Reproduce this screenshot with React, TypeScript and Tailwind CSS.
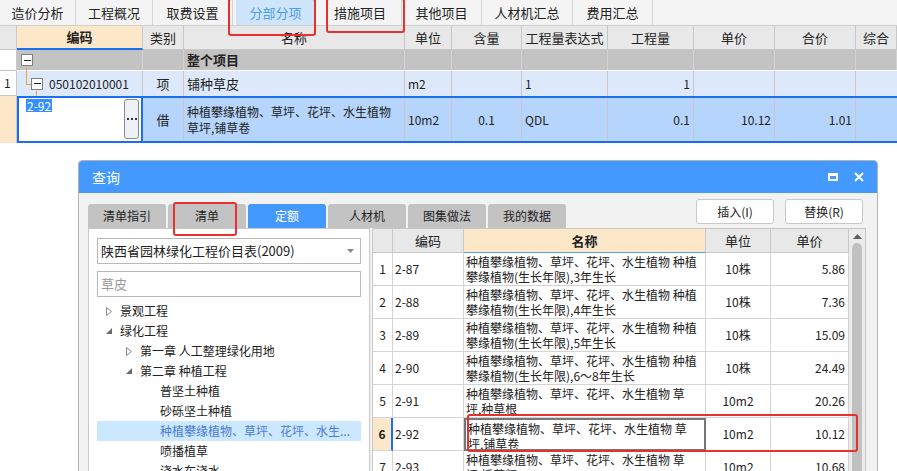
import React from 'react'

const topTabs = [
  { label: '造价分析', w: 'w-[76px]' },
  { label: '工程概况', w: 'w-[77px]' },
  { label: '取费设置', w: 'w-[80px]' },
  { label: '分部分项', w: 'w-[80px]', active: true },
  { label: '措施项目', w: 'w-[83px]' },
  { label: '其他项目', w: 'w-[80px]' },
  { label: '人材机汇总', w: 'w-[91px]' },
  { label: '费用汇总', w: 'w-[80px]' },
]

const headCols = ['编码', '类别', '名称', '单位', '含量', '工程量表达式', '工程量', '单价', '合价', '综合']

const quotaRows = [
  { no: '1', code: '2-87', name: ['种植攀缘植物、草坪、花坪、水生植物 种植', '攀缘植物(生长年限),3年生长'], unit: '10株', price: '5.86' },
  { no: '2', code: '2-88', name: ['种植攀缘植物、草坪、花坪、水生植物 种植', '攀缘植物(生长年限),4年生长'], unit: '10株', price: '7.36' },
  { no: '3', code: '2-89', name: ['种植攀缘植物、草坪、花坪、水生植物 种植', '攀缘植物(生长年限),5年生长'], unit: '10株', price: '15.09' },
  { no: '4', code: '2-90', name: ['种植攀缘植物、草坪、花坪、水生植物 种植', '攀缘植物(生长年限),6～8年生长'], unit: '10株', price: '24.49' },
  { no: '5', code: '2-91', name: ['种植攀缘植物、草坪、花坪、水生植物 草', '坪,种草根'], unit: '10m2', price: '20.26' },
  { no: '6', code: '2-92', name: ['种植攀缘植物、草坪、花坪、水生植物 草', '坪,铺草卷'], unit: '10m2', price: '10.12', selected: true },
  { no: '7', code: '2-93', name: ['种植攀缘植物、草坪、花坪、水生植物 草', '坪,播草籽'], unit: '10m2', price: '10.68' },
]

function Collapsed() {
  return (
    <svg width="6" height="9" viewBox="0 0 6 9" className="shrink-0">
      <path d="M0.5 0.5 L5.5 4.5 L0.5 8.5 Z" fill="#fff" stroke="#8a8a8a" />
    </svg>
  )
}

function Expanded() {
  return (
    <svg width="6" height="6" viewBox="0 0 6 6" className="shrink-0">
      <path d="M6 0 L6 6 L0 6 Z" fill="#6b6b6b" />
    </svg>
  )
}

function MinusBox() {
  return (
    <div className="w-[12px] h-[12px] border border-[#808080] bg-white flex items-center justify-center">
      <div className="w-[7px] h-[1px] bg-[#222]" />
    </div>
  )
}

function TreeItem({ level, icon, label, selected }: { level: number; icon?: 'c' | 'e'; label: string; selected?: boolean }) {
  const pad = level === 0 ? 'pl-[9px]' : level === 1 ? 'pl-[29px]' : 'pl-[63px]'
  return (
    <div className={`h-[20px] flex items-center gap-[8px] ${pad} ${selected ? 'bg-[#cce8ff] text-[#4a7bd6]' : 'text-[#222]'}`}>
      {icon === 'c' && <Collapsed />}
      {icon === 'e' && <Expanded />}
      <span className="whitespace-nowrap">{label}</span>
    </div>
  )
}

export default function App() {
  return (
    <div className="relative w-[897px] h-[471px] overflow-hidden bg-white font-['Noto_Sans_CJK_SC','Noto_Sans',sans-serif] text-[12px] text-[#222]">
      {/* top tab bar */}
      <div className="h-[26px] flex bg-[#f4f4f4] border-b border-[#cfcfcf]">
        {topTabs.map((t) => (
          <div
            key={t.label}
            className={`${t.w} flex items-center justify-center text-[13px] border-r border-[#d6d6d6] ${t.active ? 'bg-[#cfe5fb] text-[#4b9bf3] mx-[3px] w-[77px]' : 'text-[#222]'}`}
          >
            {t.label}
          </div>
        ))}
      </div>

      {/* header */}
      <div className="grid grid-cols-[17px_126px_41px_221px_47px_70px_86px_86px_81px_81px_41px] h-[24px] bg-[#e8e8e8] text-[13px]">
        <div className="border-r border-b border-[#c8c8c8]" />
        {headCols.map((h, i) => (
          <div
            key={h}
            className={`flex items-center justify-center border-r border-[#c8c8c8] whitespace-nowrap overflow-hidden ${i === 0 ? 'bg-[#fde7c9] font-bold border-b-2 border-b-[#1a6ff0]' : 'border-b'}`}
          >
            {h}
          </div>
        ))}
      </div>

      {/* 整个项目 */}
      <div className="grid grid-cols-[17px_126px_41px_221px_47px_70px_86px_86px_81px_81px_41px] h-[21px]">
        <div className="bg-white border-r border-[#c8c8c8]" />
        <div className="bg-[#c3c3c3] border-r border-[#d2d2d2] flex items-center pl-[4px] relative">
          <MinusBox />
          <div className="absolute left-[9px] top-[17px] w-[1px] h-[8px] bg-[#f0a040]" />
        </div>
        <div className="bg-[#c3c3c3] border-r border-[#d2d2d2]" />
        <div className="bg-[#c3c3c3] border-r border-[#d2d2d2] flex items-center pl-[3px] font-bold text-[13px]">整个项目</div>
        {[0, 1, 2, 3, 4, 5, 6, 7].map((i) => (
          <div key={i} className="bg-[#c3c3c3] border-r border-[#d2d2d2]" />
        ))}
      </div>

      {/* row 1 */}
      <div className="grid grid-cols-[17px_126px_41px_221px_47px_70px_86px_86px_81px_81px_41px] h-[25px] bg-[#dde9fb]">
        <div className="bg-white border-r border-b border-[#c8c8c8] flex items-center pl-[4px]">1</div>
        <div className="relative border-r border-[#c8c8c8] flex items-center pl-[14px] gap-[6px]">
          <div className="absolute left-[9px] top-0 w-[1px] h-[13px] bg-[#f0a040]" />
          <div className="absolute left-[9px] top-[13px] w-[5px] h-[1px] bg-[#f0a040]" />
          <div className="absolute left-[19px] top-[20px] w-[1px] h-[5px] bg-[#f0a040]" />
          <MinusBox />
          <span>050102010001</span>
        </div>
        <div className="border-r border-[#c8c8c8] flex items-center justify-center text-[13px]">项</div>
        <div className="border-r border-[#c8c8c8] flex items-center pl-[3px] text-[13px]">铺种草皮</div>
        <div className="border-r border-[#c8c8c8] flex items-center pl-[3px]">m2</div>
        <div className="border-r border-[#c8c8c8]" />
        <div className="border-r border-[#c8c8c8] flex items-center pl-[3px]">1</div>
        <div className="border-r border-[#c8c8c8] flex items-center justify-end pr-[3px]">1</div>
        <div className="border-r border-[#c8c8c8]" />
        <div className="border-r border-[#c8c8c8]" />
        <div />
      </div>

      {/* row 2 */}
      <div className="flex h-[47px]">
        <div className="w-[17px] bg-[#fde7c9] border-r border-[#c8c8c8]" />
        <div className="flex-1 grid grid-cols-[124px_41px_221px_47px_70px_86px_86px_81px_81px_41px] border-y-2 border-l-2 border-[#1a6ff0] bg-[#b5d5fd]">
          <div className="bg-white border-r-2 border-[#1a6ff0] relative">
            <span className="absolute left-[7px] top-[1px] bg-[#3390ff] text-white leading-[13px] px-[1px]">2-92</span>
            <div className="absolute right-[2px] top-[1px] w-[15px] h-[40px] rounded-[3px] border border-[#8a8a8a] bg-[#eef2f8] flex items-center justify-center gap-[2px]">
              <div className="w-[2px] h-[2px] bg-[#333]" />
              <div className="w-[2px] h-[2px] bg-[#333]" />
              <div className="w-[2px] h-[2px] bg-[#333]" />
            </div>
          </div>
          <div className="border-r border-[#c8c8c8] flex items-center justify-center text-[13px]">借</div>
          <div className="border-r border-[#c8c8c8] flex flex-col justify-center pl-[3px] text-[12px] leading-[16px] whitespace-nowrap overflow-hidden">
            <span>种植攀缘植物、草坪、花坪、水生植物</span>
            <span>草坪,铺草卷</span>
          </div>
          <div className="border-r border-[#c8c8c8] flex items-center pl-[3px]">10m2</div>
          <div className="border-r border-[#c8c8c8] flex items-center justify-center">0.1</div>
          <div className="border-r border-[#c8c8c8] flex items-center pl-[3px]">QDL</div>
          <div className="border-r border-[#c8c8c8] flex items-center justify-end pr-[3px]">0.1</div>
          <div className="border-r border-[#c8c8c8] flex items-center justify-end pr-[3px]">10.12</div>
          <div className="border-r border-[#c8c8c8] flex items-center justify-end pr-[3px]">1.01</div>
          <div />
        </div>
      </div>

      {/* dialog window */}
      <div className="absolute left-[78px] top-[160px] w-[800px] h-[330px] border border-[#b4b4b4] rounded-t-[4px] bg-[#f2f2f2] overflow-hidden">
        <div className="h-[32px] bg-[#4499ff] flex items-center justify-between pl-[13px] pr-[13px] text-white">
          <span className="text-[14px]">查询</span>
          <div className="flex items-center gap-[16px]">
            <div className="w-[10px] h-[8px] border-2 border-white border-t-[3px]" />
            <svg width="10" height="10" viewBox="0 0 10 10">
              <path d="M1 1 L9 9 M9 1 L1 9" stroke="white" strokeWidth="2" />
            </svg>
          </div>
        </div>

        <div className="px-[9px]">
          <div className="h-[35px] flex justify-between">
            <div className="flex gap-[2px] items-end h-[35px]">
              {['清单指引', '清单', '定额', '人材机', '图集做法', '我的数据'].map((t) => (
                <div
                  key={t}
                  className={`w-[78px] h-[24px] rounded-t-[3px] flex items-center justify-center text-[12px] ${t === '定额' ? 'bg-[#4499ff] text-white' : 'bg-[#c3c3c3] text-[#222]'}`}
                >
                  {t}
                </div>
              ))}
            </div>
            <div className="flex gap-[11px] pt-[6px] pr-[5px]">
              <div className="w-[78px] h-[25px] bg-white border border-[#c8c8c8] rounded-[3px] flex items-center justify-center">插入(I)</div>
              <div className="w-[78px] h-[25px] bg-white border border-[#c8c8c8] rounded-[3px] flex items-center justify-center">替换(R)</div>
            </div>
          </div>

          <div className="flex gap-[2px] h-[260px]">
            {/* left panel */}
            <div className="w-[282px] bg-white border border-[#c8c8c8] px-[8px] pt-[9px]">
              <div className="h-[26px] border border-[#b8b8b8] flex items-center justify-between pl-[3px] pr-[6px]">
                <span className="text-[13px]">陕西省园林绿化工程价目表(2009)</span>
                <svg width="7" height="4" viewBox="0 0 7 4">
                  <path d="M0 0 L7 0 L3.5 4 Z" fill="#888" />
                </svg>
              </div>
              <div className="h-[26px] mt-[7px] border border-[#b8b8b8] flex items-center pl-[3px] text-[13px] text-[#9a9a9a]">草皮</div>
              <div className="mt-[4px] text-[12px]">
                <TreeItem level={0} icon="c" label="景观工程" />
                <TreeItem level={0} icon="e" label="绿化工程" />
                <TreeItem level={1} icon="c" label="第一章 人工整理绿化用地" />
                <TreeItem level={1} icon="e" label="第二章 种植工程" />
                <TreeItem level={2} label="普坚土种植" />
                <TreeItem level={2} label="砂砾坚土种植" />
                <TreeItem level={2} label="种植攀缘植物、草坪、花坪、水生..." selected />
                <TreeItem level={2} label="喷播植草" />
                <TreeItem level={2} label="浇水车浇水" />
              </div>
            </div>

            {/* right table */}
            <div className="flex border border-[#c8c8c8] bg-white">
              <div className="w-[476px]">
                <div className="grid grid-cols-[20px_71px_242px_65px_78px] h-[24px] bg-[#e8e8e8] text-[13px]">
                  <div className="border-r border-b border-[#c8c8c8]" />
                  <div className="border-r border-b border-[#c8c8c8] flex items-center justify-center">编码</div>
                  <div className="border-r border-[#c8c8c8] border-b border-b-[#5aa0f0] bg-[#fde7c9] flex items-center justify-center font-bold">名称</div>
                  <div className="border-r border-b border-[#c8c8c8] flex items-center justify-center">单位</div>
                  <div className="border-r border-b border-[#c8c8c8] flex items-center justify-center">单价</div>
                </div>
                {quotaRows.map((r) => (
                  <div key={r.no} className="grid grid-cols-[20px_71px_242px_65px_78px] h-[33px] text-[12px]">
                    <div className={`border-r border-b border-[#d4d4d4] flex items-center justify-center ${r.selected ? 'bg-[#fde7c9] font-bold border-r-2 border-r-[#1a6ff0]' : ''}`}>{r.no}</div>
                    <div className="border-r border-b border-[#d4d4d4] flex items-center pl-[2px]">{r.code}</div>
                    <div className={`flex flex-col px-[2px] pt-[1px] leading-[15px] whitespace-nowrap overflow-hidden ${r.selected ? 'border-2 border-[#777]' : 'border-r border-b border-[#d4d4d4]'}`}>
                      <span>{r.name[0]}</span>
                      <span>{r.name[1]}</span>
                    </div>
                    <div className="border-r border-b border-[#d4d4d4] flex items-center justify-center">{r.unit}</div>
                    <div className="border-r border-b border-[#d4d4d4] flex items-center justify-end pr-[3px]">{r.price}</div>
                  </div>
                ))}
              </div>
              {/* scrollbar */}
              <div className="w-[16px] bg-[#ebebeb] flex flex-col items-center pt-[5px] gap-[4px]">
                <svg width="9" height="5" viewBox="0 0 9 5">
                  <path d="M0 5 L4.5 0 L9 5 Z" fill="#606060" />
                </svg>
                <div className="w-[10px] h-[240px] rounded-full bg-[#c1c1c1]" />
              </div>
            </div>
          </div>
        </div>
      </div>

      {/* red annotation boxes */}
      <div className="absolute left-[228px] top-[-2px] w-[88px] h-[38px] border-2 border-[#e8302c] rounded-[3px]" />
      <div className="absolute left-[326px] top-[-2px] w-[79px] h-[35px] border-2 border-[#e8302c] rounded-[3px]" />
      <div className="absolute left-[173px] top-[202px] w-[64px] h-[34px] border-2 border-[#e8302c] rounded-[3px]" />
      <div className="absolute left-[467px] top-[414px] w-[391px] h-[38px] border-2 border-[#e8302c] rounded-[3px]" />
    </div>
  )
}
